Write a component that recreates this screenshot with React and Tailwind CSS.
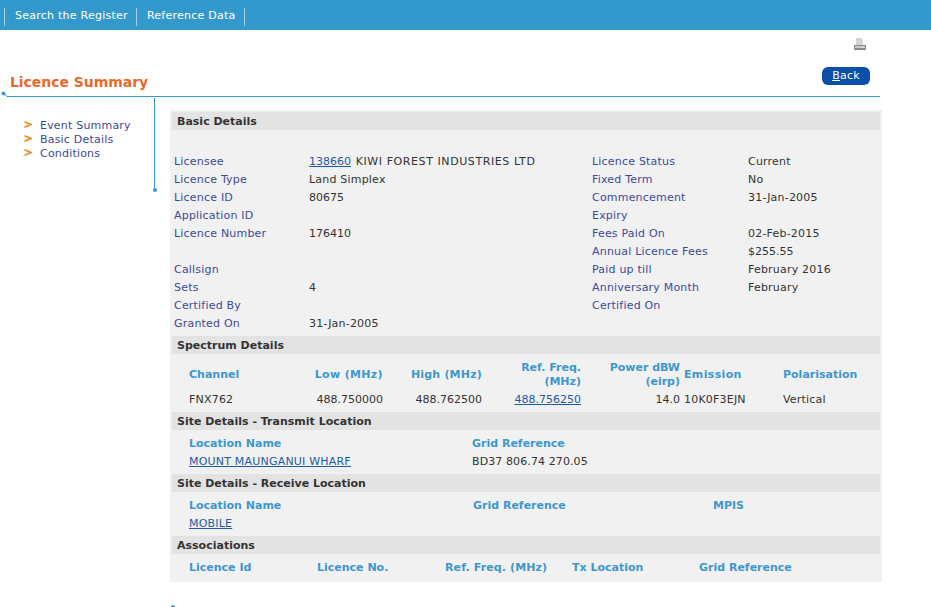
const basicRows = [
  ["Licensee", "138660", "Licence Status", "Current"],
  ["Licence Type", "Land Simplex", "Fixed Term", "No"],
  ["Licence ID", "80675", "Commencement", "31-Jan-2005"],
  ["Application ID", "", "Expiry", ""],
  ["Licence Number", "176410", "Fees Paid On", "02-Feb-2015"],
  ["", "", "Annual Licence Fees", "$255.55"],
  ["Callsign", "", "Paid up till", "February 2016"],
  ["Sets", "4", "Anniversary Month", "February"],
  ["Certified By", "", "Certified On", ""],
  ["Granted On", "31-Jan-2005", "", ""],
];

function SectionHeader({ children }) {
  return (
    <div className="mx-[2px] h-[18px] bg-[#e3e3e3] pl-[5px] font-bold leading-[20px] tracking-normal text-[#333333]">
      {children}
    </div>
  );
}

function Heading({ className, children }) {
  return <div className={"font-bold tracking-normal text-[#3d97cf] " + (className || "")}>{children}</div>;
}

function Value({ children }) {
  const numeric = /^[\d.$]+$/.test(children);
  return <div className={numeric ? "h-[18px] tracking-normal" : "h-[18px]"}>{children}</div>;
}

export default function App() {
  return (
    <div className="relative h-[607px] w-[931px] overflow-hidden bg-white font-['DejaVu_Sans',Verdana,sans-serif] text-[11px] tracking-[0.2px] text-[#333333]">
      {/* Top nav */}
      <nav className="flex h-[30px] items-center bg-[#3399cc] pl-[4px] pt-[4px] tracking-[0.25px] text-white">
        <div className="flex h-[18px] items-center border-l border-r border-[#9fd0e8] pb-[2px] pl-[10px] pr-[8px]">Search the Register</div>
        <div className="flex h-[18px] items-center border-r border-[#9fd0e8] pb-[2px] pl-[10px] pr-[8px]">Reference Data</div>
      </nav>

      {/* Print icon */}
      <div className="flex h-[20px] justify-end pt-[8px] pr-[65px]">
        <svg width="12" height="12" viewBox="0 0 12 12">
          <path d="M2 0h5l2 2v5H2z" fill="#d4d4d4" />
          <rect x="0" y="7" width="12" height="5" fill="#8a8a8a" />
          <rect x="1" y="8" width="10" height="2" fill="#c8c8c8" />
          <rect x="8" y="9" width="1" height="1" fill="#ffffff" />
        </svg>
      </div>

      {/* Title row */}
      <div className="ml-[7px] flex h-[47px] w-[873px] items-end justify-between border-b border-[#3d97cf] pb-[2px]">
        <h1 className="pb-[2px] pl-[3px] text-[14px] font-bold leading-[20px] tracking-[-0.05px] text-[#ea6a2a]">Licence Summary</h1>
        <button className="mb-[9px] mr-[10px] h-[18px] w-[48px] rounded-[6px] bg-[#0a4fa8] text-[11px] leading-[18px] text-white">
          <span className="underline">B</span>ack
        </button>
      </div>
      <svg className="absolute left-[1px] top-[91px]" width="8" height="8" viewBox="0 0 8 8">
        <circle cx="2.5" cy="2.5" r="2" fill="#3d97cf" />
        <path d="M3 3l4 3" stroke="#3d97cf" strokeWidth="1" />
      </svg>

      {/* Side rule */}
      <div className="absolute left-[154px] top-[98px] h-[91px] w-px bg-[#3d97cf]" />
      <div className="absolute left-[153px] top-[188px] h-[4px] w-[4px] rounded-full bg-[#3d97cf]" />
      <div className="absolute left-[171px] top-[605px] h-[4px] w-[4px] rounded-full bg-[#3d97cf]" />

      <div className="flex pt-[13px]">
        {/* Side menu */}
        <aside className="w-[170px] pl-[24px] pt-[9px] leading-[14px] text-[#3b4a9c]">
          {["Event Summary", "Basic Details", "Conditions"].map((item) => (
            <div key={item} className="flex h-[14px] items-center">
              <svg className="-mt-[3px] mr-[8px] shrink-0" width="8" height="7" viewBox="0 0 8 7">
                <path d="M0.5 0.8L7 3.5L0.5 6.2" fill="none" stroke="#f08a24" strokeWidth="1.7" />
              </svg>
              <span>{item}</span>
            </div>
          ))}
        </aside>

        {/* Main panel */}
        <main className="w-[712px] bg-[#f1f1f1] pb-[5px] pt-[2px]">
          <SectionHeader>Basic Details</SectionHeader>
          <div className="grid grid-cols-[135px_283px_156px_1fr] pl-[4px] pt-[23px] leading-[18px]">
            {basicRows.map((row) => (
              <div key={row[0] + row[2]} className="contents">
                <div className="h-[18px] text-[#3b4a9c]">{row[0]}</div>
                {row[0] === "Licensee" ? (
                  <div className="h-[18px]">
                    <a className="tracking-normal text-[#1f5aa8] underline">{row[1]}</a>{" "}
                    <span className="ml-[1px] tracking-[0.58px]">KIWI FOREST INDUSTRIES LTD</span>
                  </div>
                ) : (
                  <Value>{row[1]}</Value>
                )}
                <div className="h-[18px] text-[#3b4a9c]">{row[2]}</div>
                <Value>{row[3]}</Value>
              </div>
            ))}
          </div>

          <div className="mt-[3px]">
            <SectionHeader>Spectrum Details</SectionHeader>
          </div>
          <div className="box-border grid h-[37px] grid-cols-[95px_99px_99px_99px_99px_103px_1fr] items-center pl-[19px] pt-[5px] leading-[14px]">
            <Heading>Channel</Heading>
            <Heading className="text-right !tracking-[0.35px]">Low (MHz)</Heading>
            <Heading className="text-right !tracking-[0.2px]">High (MHz)</Heading>
            <Heading className="text-right">
              Ref. Freq.
              <br />
              (MHz)
            </Heading>
            <Heading className="text-right">
              Power dBW
              <br />
              (eirp)
            </Heading>
            <Heading className="pl-[4px] !tracking-[0.35px]">Emission</Heading>
            <Heading>Polarisation</Heading>
          </div>
          <div className="grid h-[18px] grid-cols-[95px_99px_99px_99px_99px_103px_1fr] pl-[19px] leading-[18px]">
            <div>FNX762</div>
            <div className="text-right tracking-normal">488.750000</div>
            <div className="text-right tracking-normal">488.762500</div>
            <div className="text-right tracking-normal">
              <a className="text-[#1f5aa8] underline">488.756250</a>
            </div>
            <div className="text-right tracking-normal">14.0</div>
            <div className="pl-[4px]">10K0F3EJN</div>
            <div>Vertical</div>
          </div>

          <div className="mt-[3px]">
            <SectionHeader>Site Details - Transmit Location</SectionHeader>
          </div>
          <div className="grid grid-cols-[283px_1fr] pl-[19px] pt-[5px] leading-[18px]">
            <Heading>Location Name</Heading>
            <Heading>Grid Reference</Heading>
            <div>
              <a className="text-[#1f5aa8] underline">MOUNT MAUNGANUI WHARF</a>
            </div>
            <div className="tracking-[0.1px]">BD37 806.74 270.05</div>
          </div>

          <div className="mt-[3px]">
            <SectionHeader>Site Details - Receive Location</SectionHeader>
          </div>
          <div className="grid grid-cols-[284px_240px_1fr] pl-[19px] pt-[5px] leading-[18px]">
            <Heading>Location Name</Heading>
            <Heading>Grid Reference</Heading>
            <Heading>MPIS</Heading>
            <div>
              <a className="text-[#1f5aa8] underline">MOBILE</a>
            </div>
          </div>

          <div className="mt-[3px]">
            <SectionHeader>Associations</SectionHeader>
          </div>
          <div className="grid grid-cols-[128px_128px_127px_127px_1fr] pl-[19px] pt-[5px] leading-[18px]">
            <Heading>Licence Id</Heading>
            <Heading>Licence No.</Heading>
            <Heading className="!tracking-[0.12px]">Ref. Freq. (MHz)</Heading>
            <Heading>Tx Location</Heading>
            <Heading>Grid Reference</Heading>
          </div>
        </main>
      </div>
    </div>
  );
}
